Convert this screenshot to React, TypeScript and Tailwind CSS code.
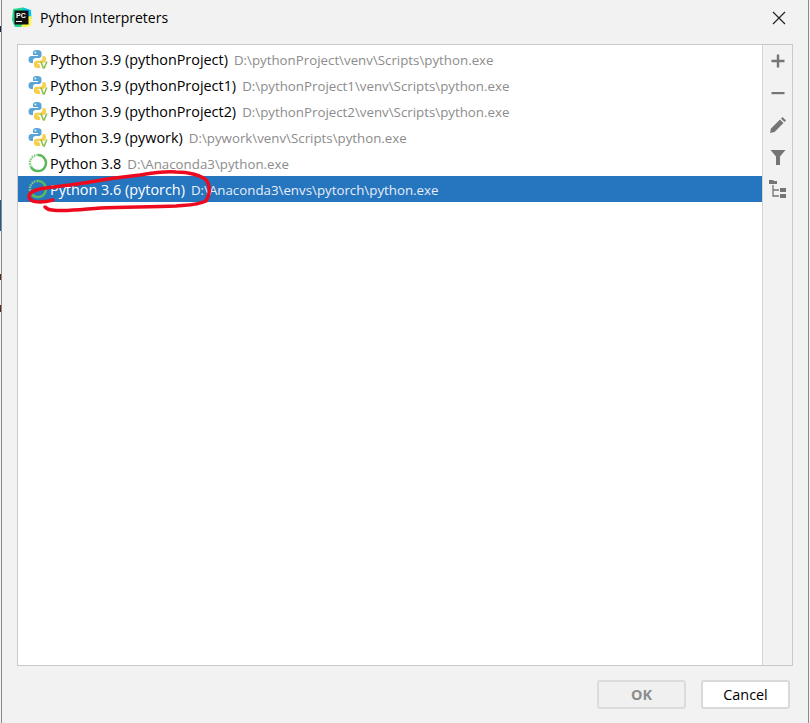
const interpreters = [
  { name: "Python 3.9 (pythonProject)", path: "D:\\pythonProject\\venv\\Scripts\\python.exe", kind: "venv" },
  { name: "Python 3.9 (pythonProject1)", path: "D:\\pythonProject1\\venv\\Scripts\\python.exe", kind: "venv" },
  { name: "Python 3.9 (pythonProject2)", path: "D:\\pythonProject2\\venv\\Scripts\\python.exe", kind: "venv" },
  { name: "Python 3.9 (pywork)", path: "D:\\pywork\\venv\\Scripts\\python.exe", kind: "venv" },
  { name: "Python 3.8", path: "D:\\Anaconda3\\python.exe", kind: "conda" },
  { name: "Python 3.6 (pytorch)", path: "D:\\Anaconda3\\envs\\pytorch\\python.exe", kind: "conda", selected: true },
];

function PyCharmLogo() {
  return (
    <svg width="21" height="21" viewBox="0 0 21 21" className="shrink-0">
      <path d="M2 2 L12 0.5 L20 4 L20 13 L15 20 L4 20 L1 13 Z" fill="#21d789" />
      <path d="M12 0.5 L20 3 L20.5 12 L13 8 Z" fill="#07c3f2" />
      <path d="M10 20.5 L20 19 L20.5 9 L14 10 Z" fill="#fcf84a" />
      <rect x="3.5" y="3.5" width="14" height="14" fill="#111" />
      <text x="5" y="10.5" fontSize="7" fontWeight="700" fill="#fff" fontFamily="'Liberation Sans', sans-serif">PC</text>
      <rect x="5" y="14" width="6" height="1" fill="#fff" />
    </svg>
  );
}

function VenvIcon() {
  return (
    <svg width="20" height="20" viewBox="0 0 20 20" className="shrink-0">
      <path d="M9 1 C5.5 1 5 2.4 5 4 V6 H10 V7 H3.5 C1.6 7 0.5 8.4 0.5 10.5 C0.5 12.6 1.6 14 3.2 14 H5 V11.6 C5 10 6.2 9 7.6 9 H11 C12.4 9 13.5 8 13.5 6.6 V4 C13.5 2.2 12 1 9 1 Z" fill="#5aa5d8" />
      <circle cx="7.4" cy="3.4" r="0.9" fill="#fff" />
      <path d="M14.5 7 V9.3 C14.5 10.9 13.3 11.8 12 11.8 H8.5 C7.1 11.8 6 12.8 6 14.2 V16.5 C6 18.2 7.8 19 9.8 19 C11 19 12 18.8 12.6 18.4 L11 14.6 H9 V14 H15 C16.4 14 17.5 13 18 11.5 C18.5 9.4 17.6 7 16 7 Z" fill="#f7cf4b" />
      <path d="M12.8 12.5 L15.4 19 H16.2 L18.8 12.5" fill="none" stroke="#8cc152" strokeWidth="1.6" />
    </svg>
  );
}

function CondaIcon() {
  return (
    <svg width="20" height="20" viewBox="0 0 20 20" className="shrink-0">
      <path d="M10 2 A8 8 0 1 1 3 14" fill="none" stroke="#5cb85c" strokeWidth="2.5" />
      <path d="M3 14 A8 8 0 0 1 10 2" fill="none" stroke="#84c884" strokeWidth="2.5" strokeDasharray="1.5 1" />
    </svg>
  );
}

function ToolIcons() {
  return (
    <div className="flex w-[29px] flex-col items-center gap-[16px] pt-[8px]">
      <svg width="16" height="16" viewBox="0 0 16 16"><path d="M6.8 1.5h2.4V6.8H14.5v2.4H9.2V14.5H6.8V9.2H1.5V6.8H6.8z" fill="#757575" /></svg>
      <svg width="16" height="16" viewBox="0 0 16 16"><rect x="1.5" y="7" width="13" height="2.2" fill="#757575" /></svg>
      <svg width="16" height="16" viewBox="0 0 16 16"><path d="M0 16 L1 11.5 L10 2.5 L13.5 6 L4.5 15 Z" fill="#757575" /><path d="M11 1.5 L12.5 0 L16 3.5 L14.5 5 Z" fill="#757575" /></svg>
      <svg width="16" height="16" viewBox="0 0 16 16"><path d="M0.5 1H15.5L10 7.5V16H6V7.5Z" fill="#757575" /></svg>
      <svg width="20" height="20" viewBox="0 0 20 20" className="-mt-[2px]">
        <path d="M1 1h4l1 1h3v3H1z" fill="#757575" />
        <path d="M5 6v11h6M5 11h6" fill="none" stroke="#757575" strokeWidth="1.3" />
        <rect x="12" y="9" width="6" height="4" fill="#757575" />
        <rect x="12" y="15" width="6" height="4" fill="#757575" />
      </svg>
    </div>
  );
}

export default function App() {
  return (
    <div className="relative flex h-[723px] w-[810px] bg-[#f2f2f2] font-['Open_Sans',sans-serif] text-[14px] text-black">
      {/* desktop peeking out past the window edge */}
      <div className="w-px shrink-0 bg-[#f2f2f2]" />
      <div className="w-px shrink-0 bg-[#8a8a8a]" />

      <div className="flex min-w-0 flex-1 flex-col">
        <div className="flex h-[35px] items-center pl-[9px]">
          <PyCharmLogo />
          <span className="ml-[8px] text-[14px]">Python Interpreters</span>
          <svg width="14" height="14" viewBox="0 0 14 14" className="ml-auto mr-[22px]">
            <path d="M1 1 L13 13 M13 1 L1 13" stroke="#222" strokeWidth="1.2" />
          </svg>
        </div>

        <div className="ml-[15px] mr-[15px] mt-[9px] flex h-[622px] border border-[#c9c9c9]">
          <div className="min-w-0 flex-1 bg-white pt-px">
            {interpreters.map((item) => (
              <div
                key={item.name}
                className={
                  item.selected
                    ? "flex h-[26px] items-center whitespace-nowrap bg-[#2675bf] pl-[10px] text-white"
                    : "flex h-[26px] items-center whitespace-nowrap pl-[10px]"
                }
              >
                {item.kind === "venv" ? <VenvIcon /> : <CondaIcon />}
                <div className="ml-[2px] flex items-baseline pt-[2px]">
                  <span className="text-[14.4px]">{item.name}</span>
                  <span className={item.selected ? "ml-[6px] text-[13.3px] text-[#e6eef7]" : "ml-[6px] text-[13.3px] text-[#8c8c8c]"}>
                    {item.path}
                  </span>
                </div>
              </div>
            ))}
          </div>
          <div className="border-l border-[#d4d4d4] bg-[#f2f2f2]">
            <ToolIcons />
          </div>
        </div>

        <div className="mr-[18px] mt-[14px] flex justify-end gap-[15px]">
          <button className="h-[29px] w-[89px] rounded-[3px] border-2 border-[#dcdcdc] bg-[#f0f0f0] pt-px text-[14.4px] font-bold text-[#8c8c8c]">
            OK
          </button>
          <button className="h-[29px] w-[89px] rounded-[3px] border-2 border-[#d9d9d9] bg-white pt-px text-[14.4px] text-black">
            Cancel
          </button>
        </div>
      </div>

      <div className="w-px shrink-0 bg-[#8a8a8a]" />
      <div className="w-px shrink-0 bg-[#f2f2f2]" />

      <span className="absolute left-0 top-[26px] h-[6px] w-[1px] bg-[#1b2a4a]" />
      <span className="absolute left-0 top-[200px] h-[31px] w-[1px] bg-[#1c5a9c]" />
      <span className="absolute left-0 top-[274px] h-[6px] w-[1px] bg-[#5a2a10]" />
      <span className="absolute left-0 top-[305px] h-[7px] w-[1px] bg-[#5a2a10]" />

      {/* red pen scribble round the selected row */}
      <svg width="810" height="723" viewBox="0 0 810 723" className="pointer-events-none absolute left-0 top-0">
        <path
          d="M53 200 C42 203 30 203 29 197 C29 192 37 189 46 188 C60 186 72 185 84 183 C100 180 120 177 140 175 C152 173 165 171 176 172 C188 172 202 175 207 181 C211 188 209 196 206 201 C198 205 188 205 176 206 C150 207 125 207 100 208 C85 209 66 212 52 210 C48 210 46 208 45 207"
          fill="none"
          stroke="#ee0a1e"
          strokeWidth="3.5"
          strokeLinecap="round"
          strokeLinejoin="round"
        />
      </svg>
    </div>
  );
}
